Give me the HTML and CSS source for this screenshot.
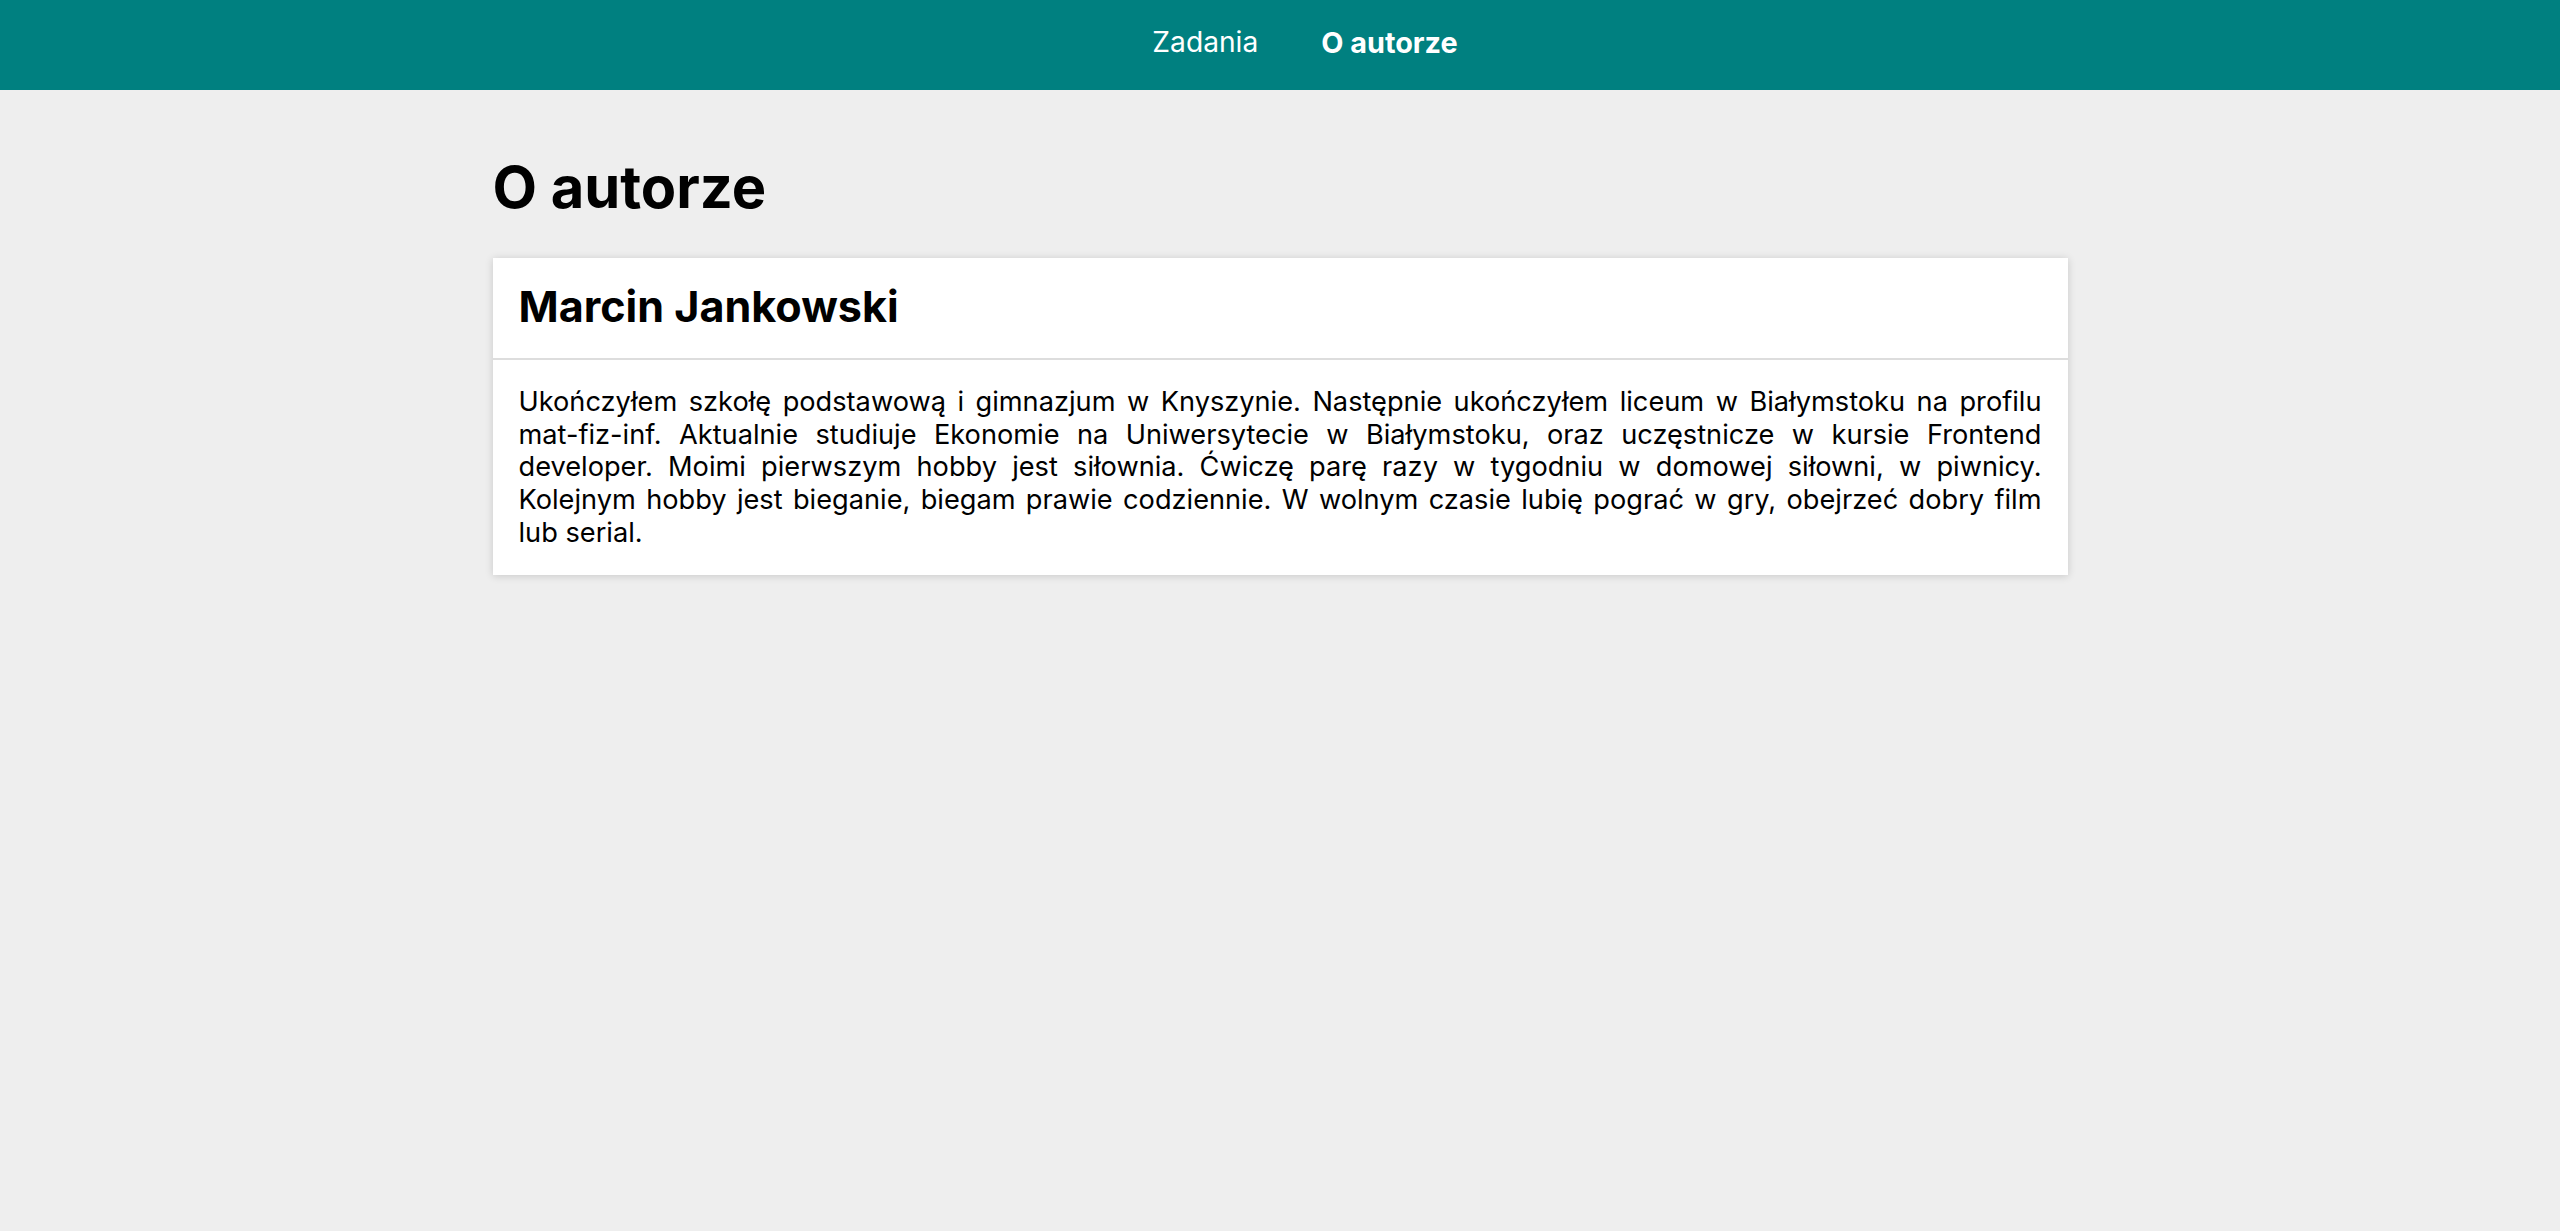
FILE: index.html
```html
<!DOCTYPE html>
<html lang="pl">
<head>
<meta charset="utf-8">
<title>O autorze</title>
<link rel="stylesheet" href="styles.css">
</head>
<body>
<nav class="topnav">
  <a class="topnav-link" href="#">Zadania</a>
  <a class="topnav-link topnav-link-active" href="#">O autorze</a>
</nav>
<main class="page">
  <h1 class="page-title">O autorze</h1>
  <section class="card">
    <header class="card-header">
      <h2 class="card-title">Marcin Jankowski</h2>
    </header>
    <div class="card-body">
      <p class="card-text">Ukończyłem szkołę podstawową i gimnazjum w Knyszynie. Następnie ukończyłem liceum w Białymstoku na profilu mat-fiz-inf. Aktualnie studiuje Ekonomie na Uniwersytecie w Białymstoku, oraz uczęstnicze w kursie Frontend developer. Moimi pierwszym hobby jest siłownia. Ćwiczę parę razy w tygodniu w domowej siłowni, w piwnicy. Kolejnym hobby jest bieganie, biegam prawie codziennie. W wolnym czasie lubię pograć w gry, obejrzeć dobry film lub serial.</p>
    </div>
  </section>
</main>
</body>
</html>
```
FILE: styles.css
```css
* { box-sizing: border-box; }
html, body { margin: 0; padding: 0; }
body {
  background: #eeeeee;
  color: #000;
  font-family: "Inter", "Noto Sans", sans-serif;
  min-height: 100vh;
}
.topnav {
  background: #008080;
  display: flex;
  justify-content: center;
  gap: 63px;
  padding: 26px 0 31px 50px;
  height: 90px;
}
.topnav-link {
  color: #fff;
  text-decoration: none;
  font-size: 28.2px;
  line-height: 33px;
  font-weight: 400;
}
.topnav-link-active { font-weight: 700; font-size: 28.8px; }
.page {
  width: 1575px;
  margin: 0 auto;
  padding-top: 63px;
}
.page-title {
  margin: 0 0 36px 0;
  font-size: 57.8px;
  line-height: 69.4px;
  font-weight: 700;
  letter-spacing: 0;
}
.card {
  background: #fff;
  box-shadow: 0 1px 8px rgba(0,0,0,0.16);
}
.card-header {
  padding: 22.5px 26px 25.8px;
  border-bottom: 2px solid #dddddd;
}
.card-title {
  margin: 0;
  font-size: 43.1px;
  line-height: 51.7px;
  font-weight: 700;
}
.card-body {
  padding: 25.8px 26px 25.5px;
}
.card-text {
  margin: 0;
  font-size: 27.2px;
  line-height: 32.64px;
  text-align: justify;
}
```
